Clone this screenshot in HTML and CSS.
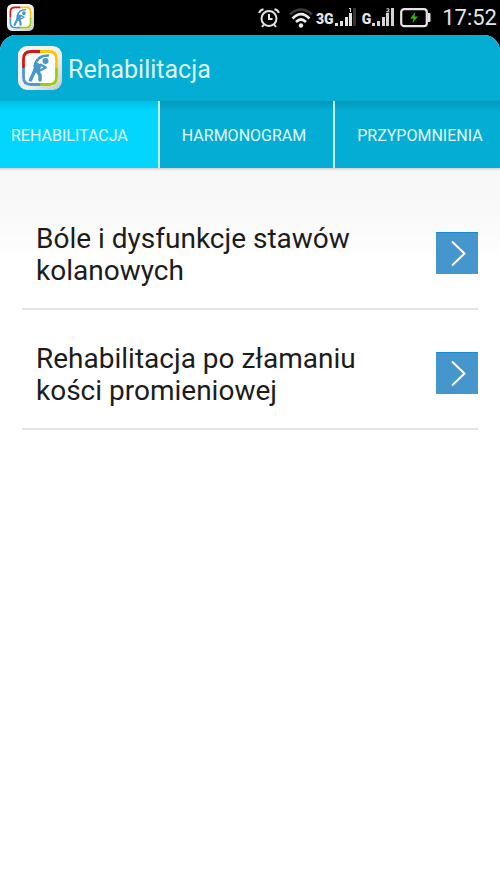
FILE: index.html
```html
<!DOCTYPE html>
<html lang="pl">
<head>
<meta charset="utf-8">
<meta name="viewport" content="width=device-width, initial-scale=1">
<title>Rehabilitacja</title>
<link rel="stylesheet" href="styles.css">
</head>
<body>
<svg class="defs" aria-hidden="true">
  <defs>
    <linearGradient id="plate" x1="0" y1="0" x2="1" y2="1">
      <stop offset="0" stop-color="#fafafa"/>
      <stop offset="0.6" stop-color="#ececec"/>
      <stop offset="1" stop-color="#c4c8ca"/>
    </linearGradient>
  </defs>
  <symbol id="logo" viewBox="0 0 44 44">
    <rect x="0" y="0" width="44" height="44" rx="9" fill="url(#plate)"/>
    <rect x="4" y="4" width="36" height="36" rx="8" fill="#fff"/>
    <g fill="none" stroke-width="2.800">
      <path d="M5.500 22V13Q5.500 5.500 13 5.500H22" stroke="#d8150f"/>
      <path d="M22 5.500H31Q38.500 5.500 38.500 13V22" stroke="#fcc60a"/>
      <path d="M38.500 22V31Q38.500 38.500 31 38.500H22" stroke="#97cf0c"/>
      <path d="M22 38.500H13Q5.500 38.500 5.500 31V22" stroke="#4c9ad0"/>
    </g>
    <g fill="none" stroke="#4798cc" stroke-linecap="round" stroke-linejoin="round">
      <path d="M30 9.500C24 9.500 18.500 12 16.500 20" stroke-width="2.500"/>
      <path d="M17.500 17L22.500 19.500L20.500 24.500L16 26Z" fill="#4798cc" stroke-width="2"/>
      <path d="M17 24L12.500 34" stroke-width="3.500"/>
      <path d="M19 25L22 29V34" stroke-width="3.500"/>
      <path d="M22.500 18.500L28 21.500L21 25" stroke-width="2"/>
    </g>
    <circle cx="27.500" cy="15" r="3" fill="#4798cc"/>
  </symbol>
</svg>
<div class="status">
  <svg class="status-logo" viewBox="0 0 44 44" aria-hidden="true"><use href="#logo"/></svg>
  <div class="status-icons">
    <svg width="22" height="20" viewBox="0 0 22 20" aria-hidden="true">
      <g fill="none" stroke="#e4e4e4" stroke-width="2">
        <circle cx="11" cy="10.500" r="7.500"/>
        <path d="M11 6V11H14.500M6 16.500L4 19M16 16.500L18 19M1.200 5Q2 2 5.500 1.300M20.800 5Q20 2 16.500 1.300"/>
      </g>
    </svg>
    <svg class="wifi" width="24" height="20" viewBox="0 0 24 20" aria-hidden="true">
      <g fill="none" stroke-width="2.600">
        <path d="M1 6.500Q12-3.500 23 6.500" stroke="#3b3b3b"/>
        <path d="M3.500 10.500Q12 2 20.500 10.500M7 14Q12 9 17 14" stroke="#ececec"/>
      </g>
      <circle cx="12" cy="17.500" r="2.200" fill="#ececec"/>
    </svg>
    <span class="signal">
      <span class="net">3G</span>
      <svg width="21" height="19" viewBox="0 0 21 19" aria-hidden="true">
        <path d="M0 15h3v3H0zM5 13h3v5H5zM10 9h3v9h-3zM14 5h3v13h-3zM14 0h2v4h-1V1h-1z" fill="#e4e4e4"/>
        <path d="M18 0h3v18h-3z" fill="#333"/>
      </svg>
    </span>
    <span class="signal">
      <span class="net">G</span>
      <svg width="22" height="19" viewBox="0 0 22 19" aria-hidden="true">
        <path d="M0 15h3v3H0zM5 13h3v5H5zM10 9h3v9h-3zM14 5h3v13h-3zM19 0h3v18h-3z" fill="#d4d4d4"/>
        <path d="M14.500.8h2.500v1.500l-2.500 1.500h3" fill="none" stroke="#d4d4d4"/>
      </svg>
    </span>
    <svg width="31" height="20" viewBox="0 0 31 20" aria-hidden="true">
      <rect x="1.200" y="1.200" width="25.600" height="17" rx="3" fill="none" stroke="#e4e4e4" stroke-width="2.200"/>
      <path d="M28 5h1.500q1 0 1 1v7q0 1-1 1H28z" fill="#e4e4e4"/>
      <path d="M15.500 4L10 10.500h3.500L12.500 15L18 8.500h-3.500z" fill="#2fb70d"/>
    </svg>
  </div>
  <time class="clock">17:52</time>
</div>
<div class="app">
  <header class="bar">
    <svg class="bar-logo" viewBox="0 0 44 44" aria-hidden="true"><use href="#logo"/></svg>
    <h1>Rehabilitacja</h1>
  </header>
  <nav class="tabs">
    <button type="button" class="tab active">REHABILITACJA</button>
    <button type="button" class="tab">HARMONOGRAM</button>
    <button type="button" class="tab">PRZYPOMNIENIA</button>
  </nav>
  <main>
    <ul class="list">
      <li><span id="t1">Bóle i dysfunkcje stawów kolanowych</span>
        <button type="button" class="go" aria-labelledby="t1"><svg width="42" height="42" viewBox="0 0 42 42" aria-hidden="true"><path d="M16 8.500L28.500 20.500L16 32.500"/></svg></button></li>
      <li><span id="t2">Rehabilitacja po złamaniu kości promieniowej</span>
        <button type="button" class="go" aria-labelledby="t2"><svg width="42" height="42" viewBox="0 0 42 42" aria-hidden="true"><path d="M16 8.500L28.500 20.500L16 32.500"/></svg></button></li>
    </ul>
  </main>
</div>
</body>
</html>
```
FILE: styles.css
```css
* { box-sizing: border-box; }
body {
  margin: 0;
  min-height: 100vh;
  display: flex;
  flex-direction: column;
  background: #000;
  font-family: Roboto, "Noto Sans", sans-serif;
}
button {
  border: 0;
  padding: 0;
  font: inherit;
  cursor: pointer;
}
.defs { position: absolute; width: 0; height: 0; }

.status {
  display: flex;
  align-items: center;
  height: 35px;
  padding: 0 3px 0 7px;
  color: #e6e6e6;
}
.status-logo { width: 27px; height: 27px; }
.status-icons {
  display: flex;
  align-items: center;
  gap: 6px;
  margin-left: auto;
}
.wifi { margin-left: 3px; margin-right: -3px; }
.signal { display: flex; align-items: flex-end; gap: 1px; height: 19px; }
.net { font-size: 14px; line-height: 15px; font-weight: 900; }
.clock {
  margin-left: 11px;
  font-size: 22px;
  line-height: 36px;
}

.app {
  flex: 1;
  overflow: hidden;
  border-radius: 16px 16px 0 0;
  background: #fff;
}
.bar {
  display: flex;
  align-items: center;
  gap: 6px;
  height: 66px;
  padding: 0 18px;
  background: #03add4;
}
.bar-logo { width: 44px; height: 44px; }
h1 {
  margin: 0;
  padding-top: 4px;
  color: #dff7fc;
  font-size: 25px;
  line-height: 32px;
  font-weight: 400;
}
.tabs {
  display: flex;
  height: 67px;
  background: #03add4;
}
.tab {
  flex: none;
  padding: 2px 27px 0 22px;
  border-left: 2px solid #c5f0f8;
  background: linear-gradient(#0398bb, #03add4 10px);
  color: #e2f8fc;
  font-size: 16px;
  line-height: 20px;
  text-align: left;
}
.tab:last-child { flex: 1; padding-right: 0; }
.tab.active {
  padding: 2px 30px 0 11px;
  border-left: 0;
  background: linear-gradient(#03bfe3, #02d6ff 10px);
}
main {
  padding: 22px;
  background: linear-gradient(#d0d0d0, #f7f7f7 3px, #fafafa 60px, #fff 90px);
}
.list { margin: 0; padding: 0; list-style: none; }
.list li {
  display: flex;
  align-items: center;
  justify-content: space-between;
  gap: 48px;
  min-height: 120px;
  padding: 8px 0 0 14px;
  border-bottom: 2px solid #e4e4e4;
  color: #1c1c1c;
  font-size: 28px;
  line-height: 32px;
}
.list span { padding-top: 4px; }
.go {
  flex: none;
  width: 42px;
  height: 42px;
  border-top: 1px solid #168bd0;
  background: #4496cc;
}
.go svg { display: block; }
.go path { fill: none; stroke: #fff; stroke-width: 2; }
```
